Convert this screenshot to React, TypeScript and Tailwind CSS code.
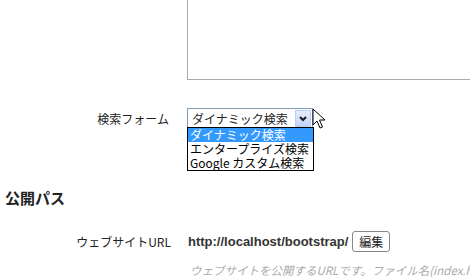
import React from 'react';

const OPTIONS = ['ダイナミック検索', 'エンタープライズ検索', 'Google カスタム検索'];

const jp = { fontFamily: '"Noto Sans CJK JP", "DejaVu Sans", sans-serif' };
const ar = { fontFamily: '"Liberation Sans", "Noto Sans CJK JP", sans-serif' };

const Cursor: React.FC = () => (
  <svg width="14" height="22" viewBox="0 0 14 22" className="absolute left-[312px] top-[108px]">
    <path d="M1 1 L1 17 L5 13 L8 20 L10.5 19 L7.5 12 L13 12 Z" fill="#fff" stroke="#000" strokeWidth="1" strokeLinejoin="round" />
  </svg>
);

export default function App() {
  return (
    <div className="relative w-[470px] h-[278px] overflow-hidden bg-white text-[#222]" style={jp}>
      {/* textarea continued from above */}
      <div className="grid grid-cols-[187px_1fr]">
        <div />
        <div className="h-[81px] border-l border-b border-[#a9a9a9] -mt-px" />
      </div>

      {/* search form row */}
      <div className="grid grid-cols-[169px_1fr] gap-[18px] items-center mt-[28px]">
        <div className="text-right text-[12px]">検索フォーム</div>
        <div className="relative w-[126px] h-[21px] border border-[#7f9db9] bg-white flex items-center">
          <span className="pl-[4px] text-[12px] leading-none flex-1">ダイナミック検索</span>
          <div className="w-[16px] h-[17px] mr-[1px] bg-gradient-to-b from-[#e6eefc] to-[#c1d3fb] border border-[#b9cdf5] flex items-center justify-center">
            <svg width="8" height="6" viewBox="0 0 8 6">
              <path d="M1 1 L4 4 L7 1" fill="none" stroke="#1a1a1a" strokeWidth="2" />
            </svg>
          </div>
          <div className="absolute left-[-1px] top-[18px] w-[127px] border border-black bg-white z-10">
            {OPTIONS.map((o, i) => (
              <div
                key={o}
                className={`h-[14px] leading-[14px] pl-[2px] text-[12px] ${i === 0 ? 'bg-[#3399ff] text-white' : 'text-black'}`}
              >
                {o}
              </div>
            ))}
          </div>
        </div>
      </div>

      {/* heading */}
      <h2 className="mt-[61px] pl-[5px] text-[15px] font-bold leading-none">公開パス</h2>

      {/* website url row */}
      <div className="grid grid-cols-[171px_1fr] gap-[17px] items-center mt-[26px]">
        <div className="text-right text-[12px]">ウェブサイトURL</div>
        <div className="flex items-center gap-[4px]">
          <span className="text-[13px] font-bold text-[#333]" style={ar}>http://localhost/bootstrap/</span>
          <button className="h-[21px] px-[6px] text-[12px] leading-none bg-white border border-[#888] rounded-[3px]">編集</button>
        </div>
      </div>

      <div className="pl-[190px] mt-[10px] text-[11.5px] italic text-[#aaa] whitespace-nowrap">
        ウェブサイトを公開するURLです。ファイル名(index.html)は含めないでください。
      </div>

      <Cursor />
    </div>
  );
}
